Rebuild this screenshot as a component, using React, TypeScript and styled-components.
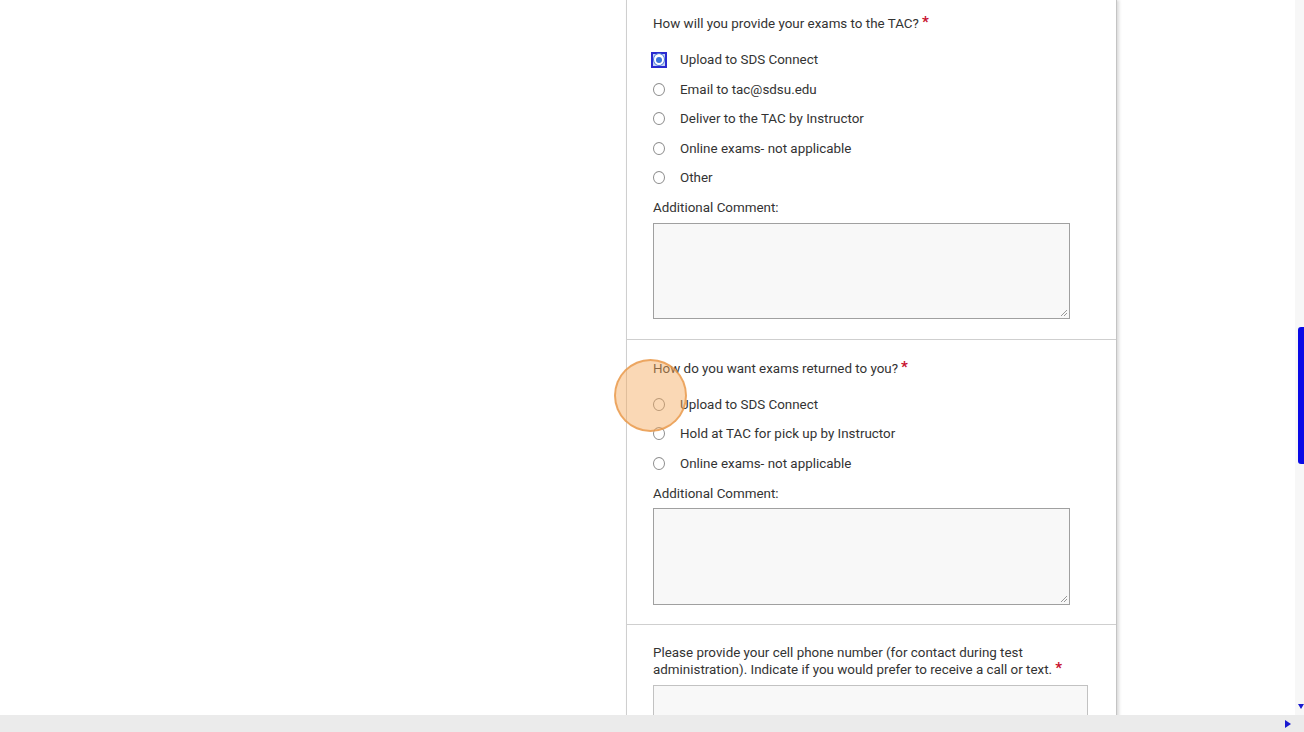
import React from "react";
import styled, { createGlobalStyle } from "styled-components";

const Global = createGlobalStyle`
  html, body { margin: 0; padding: 0; background: #fff; overflow: hidden; }
  body { font-family: Roboto, "Liberation Sans", Arial, sans-serif; color: #333; }
  * { box-sizing: border-box; }
`;

const Screen = styled.div`
  width: 1304px;
  height: 732px;
  display: flex;
  flex-direction: column;
  position: relative;
  overflow: hidden;
`;

const Viewport = styled.div`
  flex: 1;
  display: flex;
  min-height: 0;
`;

const Main = styled.div`
  flex: 1;
  padding-left: 626px;
  overflow: hidden;
`;

const Card = styled.div`
  width: 491px;
  border-left: 1px solid #cfcfcf;
  border-right: 1px solid #c4c4c4;
  box-shadow: 2px 0 3px rgba(0, 0, 0, 0.15);
  background: #fff;
  min-height: 100%;
`;

const Section = styled.div<{ $top: number; $bottom: number; $divider?: boolean }>`
  padding: ${(p) => p.$top}px 26px ${(p) => p.$bottom}px 26px;
  border-top: ${(p) => (p.$divider ? "1px solid #cfcfcf" : "none")};
`;

const Question = styled.div<{ $lh?: number }>`
  font-size: 13.4px;
  line-height: ${(p) => p.$lh ?? 18}px;
  color: #333;
`;

const Star = styled.span`
  color: #c8102e;
  font-size: 15px;
  font-weight: 700;
  line-height: 0;
  margin-left: 3px;
  vertical-align: 1px;
`;

const RadioList = styled.div`
  margin-top: 12px;
  display: flex;
  flex-direction: column;
`;

const RadioRow = styled.label`
  height: 29.5px;
  display: flex;
  align-items: center;
  font-size: 13.4px;
  color: #333;
`;

const RadioWrap = styled.span<{ $focus?: boolean }>`
  width: 16px;
  height: 16px;
  margin-left: -2px;
  margin-right: 13px;
  display: flex;
  align-items: center;
  justify-content: center;
  border: ${(p) => (p.$focus ? "2px solid #2a2ad0" : "2px solid transparent")};
  background: ${(p) => (p.$focus ? "#c7d3f2" : "transparent")};
`;

const RadioDot = styled.span<{ $checked?: boolean }>`
  width: 13px;
  height: 13px;
  border-radius: 50%;
  border: 1px solid ${(p) => (p.$checked ? "#4a78d8" : "#8e8e8e")};
  background: #fff;
  display: flex;
  align-items: center;
  justify-content: center;
  &::after {
    content: "";
    width: 6px;
    height: 6px;
    border-radius: 50%;
    background: ${(p) => (p.$checked ? "#3b74d9" : "transparent")};
  }
`;

const CommentLabel = styled.div`
  font-size: 13.4px;
  line-height: 18px;
  margin-top: 6.5px;
  margin-bottom: 5.5px;
  color: #333;
`;

const TextArea = styled.div`
  width: 417px;
  height: 96.5px;
  border: 1px solid #a0a0a0;
  background: #f8f8f8;
  position: relative;
`;

const Grip = styled.svg`
  position: absolute;
  right: 1px;
  bottom: 1px;
`;

const PhoneInput = styled.div`
  margin-top: 7px;
  width: 435px;
  height: 40px;
  border: 1px solid #c2c2c2;
  background: #f8f8f8;
`;

const VScroll = styled.div`
  width: 9px;
  background: #f7f7f7;
  position: relative;
`;

const Thumb = styled.div`
  position: absolute;
  left: 3px;
  top: 327px;
  width: 6px;
  height: 137px;
  border-radius: 3px 0 0 3px;
  background: #0a0ae6;
`;

const DownArrow = styled.div`
  position: absolute;
  right: 0;
  top: 704px;
  width: 0;
  height: 0;
  border-left: 3.5px solid transparent;
  border-right: 3.5px solid transparent;
  border-top: 5px solid #1a1ad0;
`;

const HScroll = styled.div`
  height: 17px;
  background: #ebebeb;
  display: flex;
  align-items: center;
  justify-content: flex-end;
  padding-right: 13px;
`;

const RightArrow = styled.div`
  width: 0;
  height: 0;
  border-top: 4px solid transparent;
  border-bottom: 4px solid transparent;
  border-left: 6px solid #1a1ad0;
`;

const ClickRing = styled.div`
  position: absolute;
  left: 614px;
  top: 359px;
  width: 73px;
  height: 73px;
  border-radius: 50%;
  background: rgba(243, 168, 92, 0.45);
  border: 2px solid rgba(232, 150, 70, 0.75);
  pointer-events: none;
`;

type Opt = { label: string; checked?: boolean; focus?: boolean };

const Radios: React.FC<{ options: Opt[] }> = ({ options }) => (
  <RadioList>
    {options.map((o) => (
      <RadioRow key={o.label}>
        <RadioWrap $focus={o.focus}>
          <RadioDot $checked={o.checked} />
        </RadioWrap>
        {o.label}
      </RadioRow>
    ))}
  </RadioList>
);

const Comment: React.FC = () => (
  <>
    <CommentLabel>Additional Comment:</CommentLabel>
    <TextArea>
      <Grip width="8" height="8" viewBox="0 0 8 8">
        <path d="M7 1 L1 7 M7 4 L4 7" stroke="#999" strokeWidth="1" />
      </Grip>
    </TextArea>
  </>
);

export default function App() {
  return (
    <Screen>
      <Global />
      <Viewport>
        <Main>
          <Card>
            <Section $top={15} $bottom={20}>
              <Question>
                How will you provide your exams to the TAC?<Star>*</Star>
              </Question>
              <Radios
                options={[
                  { label: "Upload to SDS Connect", checked: true, focus: true },
                  { label: "Email to tac@sdsu.edu" },
                  { label: "Deliver to the TAC by Instructor" },
                  { label: "Online exams- not applicable" },
                  { label: "Other" },
                ]}
              />
              <Comment />
            </Section>
            <Section $top={19.5} $bottom={19.2} $divider>
              <Question>
                How do you want exams returned to you?<Star>*</Star>
              </Question>
              <Radios
                options={[
                  { label: "Upload to SDS Connect" },
                  { label: "Hold at TAC for pick up by Instructor" },
                  { label: "Online exams- not applicable" },
                ]}
              />
              <Comment />
            </Section>
            <Section $top={19.5} $bottom={20} $divider>
              <Question $lh={17}>
                Please provide your cell phone number (for contact during test
                <br />
                administration). Indicate if you would prefer to receive a call or text.
                <Star>*</Star>
              </Question>
              <PhoneInput />
            </Section>
          </Card>
        </Main>
        <VScroll>
          <Thumb />
          <DownArrow />
        </VScroll>
      </Viewport>
      <HScroll>
        <RightArrow />
      </HScroll>
      <ClickRing />
    </Screen>
  );
}
